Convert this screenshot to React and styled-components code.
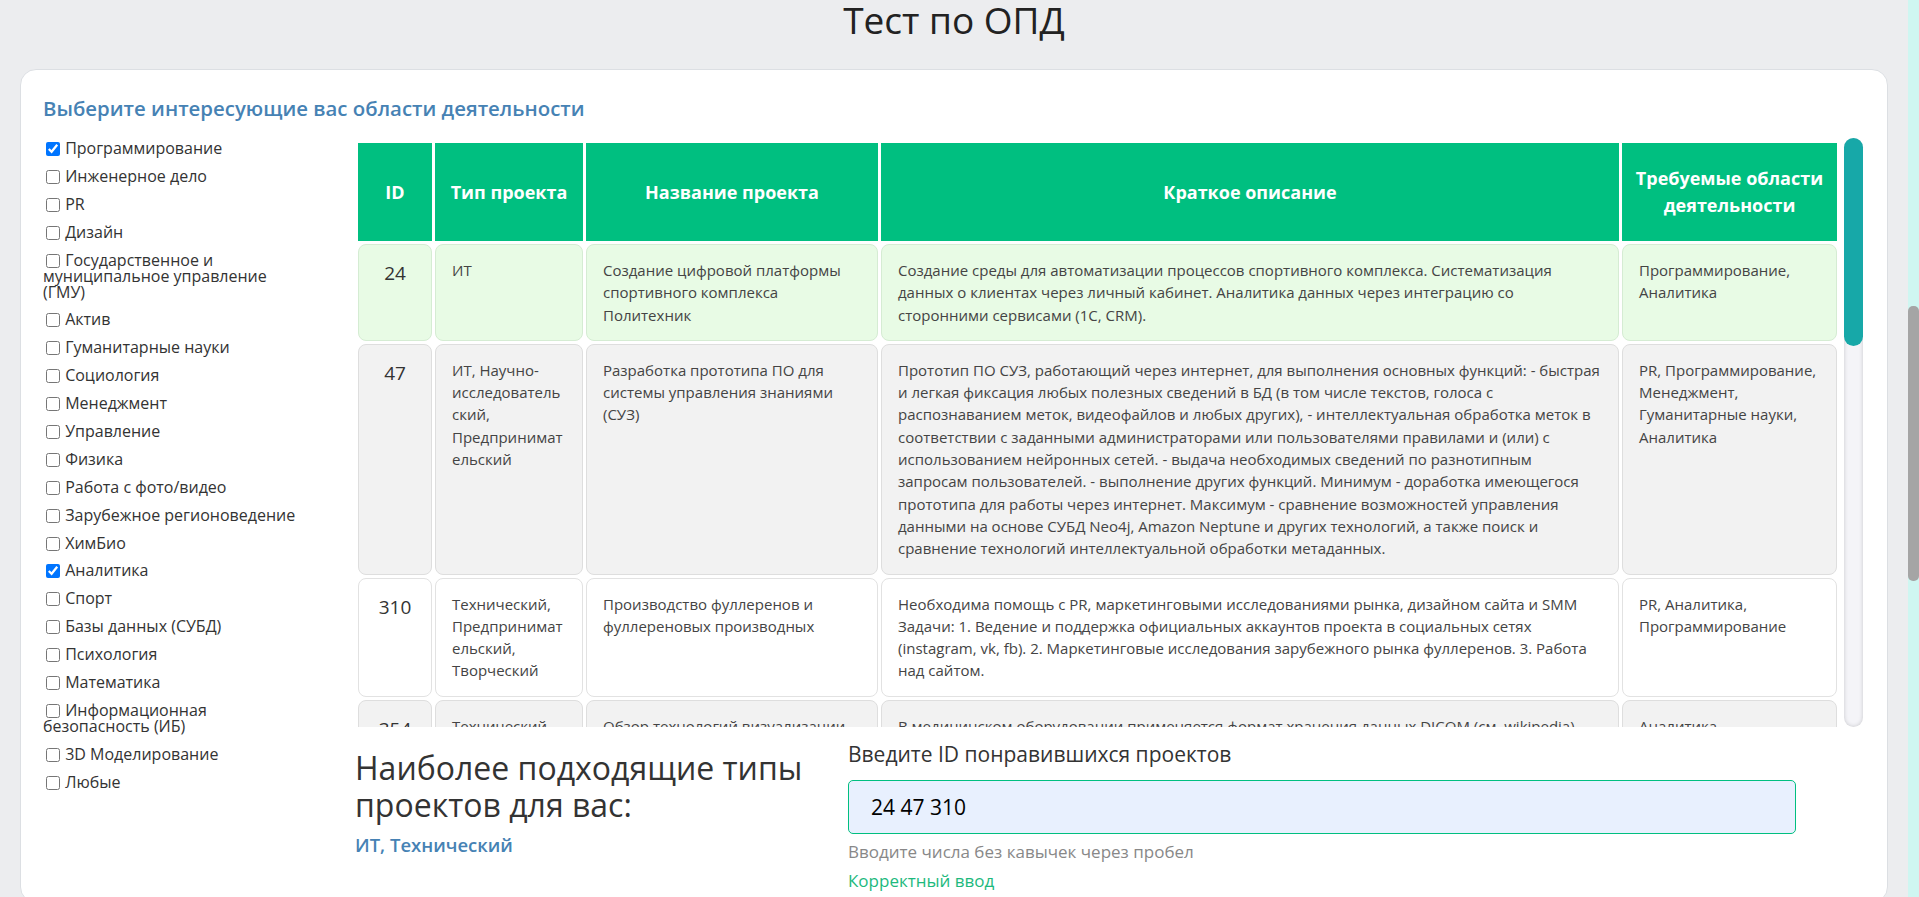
import React from 'react';
import styled, { createGlobalStyle } from 'styled-components';

const GlobalStyle = createGlobalStyle`
  body {
    margin: 0;
    overflow: hidden;
    background: #ecedef;
    font-family: 'Open Sans', 'Noto Sans', sans-serif;
    color: #333;
  }
`;

const areas = [
  { name: 'Программирование', checked: true },
  { name: 'Инженерное дело' },
  { name: 'PR' },
  { name: 'Дизайн' },
  { name: 'Государственное и муниципальное управление (ГМУ)' },
  { name: 'Актив' },
  { name: 'Гуманитарные науки' },
  { name: 'Социология' },
  { name: 'Менеджмент' },
  { name: 'Управление' },
  { name: 'Физика' },
  { name: 'Работа с фото/видео' },
  { name: 'Зарубежное регионоведение' },
  { name: 'ХимБио' },
  { name: 'Аналитика', checked: true },
  { name: 'Спорт' },
  { name: 'Базы данных (СУБД)' },
  { name: 'Психология' },
  { name: 'Математика' },
  { name: 'Информационная безопасность (ИБ)' },
  { name: '3D Моделирование' },
  { name: 'Любые' },
];

const projects = [
  {
    id: 24,
    type: 'ИТ',
    title: 'Создание цифровой платформы спортивного комплекса Политехник',
    text: 'Создание среды для автоматизации процессов спортивного комплекса. Систематизация\nданных о клиентах через личный кабинет. Аналитика данных через интеграцию со\nсторонними сервисами (1С, CRM).',
    areas: 'Программирование, Аналитика',
  },
  {
    id: 47,
    type: 'ИТ, Научно-исследовательский, Предпринимательский',
    title: 'Разработка прототипа ПО для системы управления знаниями (СУЗ)',
    text: 'Прототип ПО СУЗ, работающий через интернет, для выполнения основных функций: - быстрая\nи легкая фиксация любых полезных сведений в БД (в том числе текстов, голоса с\nраспознаванием меток, видеофайлов и любых других), - интеллектуальная обработка меток в\nсоответствии с заданными администраторами или пользователями правилами и (или) с\nиспользованием нейронных сетей. - выдача необходимых сведений по разнотипным\nзапросам пользователей. - выполнение других функций. Минимум - доработка имеющегося\nпрототипа для работы через интернет. Максимум - сравнение возможностей управления\nданными на основе СУБД Neo4j, Amazon Neptune и других технологий, а также поиск и\nсравнение технологий интеллектуальной обработки метаданных.',
    areas: 'PR, Программирование, Менеджмент, Гуманитарные науки, Аналитика',
  },
  {
    id: 310,
    type: 'Технический, Предпринимательский, Творческий',
    title: 'Производство фуллеренов и фуллереновых производных',
    text: 'Необходима помощь с PR, маркетинговыми исследованиями рынка, дизайном сайта и SMM\nЗадачи: 1. Ведение и поддержка официальных аккаунтов проекта в социальных сетях\n(instagram, vk, fb). 2. Маркетинговые исследования зарубежного рынка фуллеренов. 3. Работа\nнад сайтом.',
    areas: 'PR, Аналитика, Программирование',
  },
  {
    id: 354,
    type: 'Технический',
    title: 'Обзор технологий визуализации медицинских изображений',
    text: 'В медицинском оборудовании применяется формат хранения данных DICOM (см. wikipedia).\nНеобходимо провести обзор библиотек и программных средств для просмотра и обработки\nтаких данных, сравнить их возможности и подготовить рекомендации.',
    areas: 'Аналитика',
  },
  {
    id: 411,
    type: 'ИТ',
    title: 'Мобильное приложение для навигации по кампусу',
    text: 'Разработка мобильного приложения, позволяющего студентам и гостям университета\nнаходить аудитории, учебные корпуса и общежития. Интеграция с расписанием занятий.',
    areas: 'Программирование, Дизайн',
  },
];

const tones = {
  hover: { bg: '#e8fbe5', border: '#d5ecd3' },
  odd: { bg: '#f2f2f2', border: '#dedede' },
  even: { bg: '#ffffff', border: '#e2e2e2' },
};

const App = () => {
  return (
    <>
      <GlobalStyle />
      <Viewport>
        <Page>
          <Title>Тест по ОПД</Title>
          <Card>
            <CardHeading>Выберите интересующие вас области деятельности</CardHeading>
            <Layout>
              <Sidebar>
                {areas.map((a) => (
                  <Option key={a.name}>
                    <input type="checkbox" defaultChecked={!!a.checked} /> {a.name}
                  </Option>
                ))}
              </Sidebar>
              <Main>
                <TableFrame>
                  <TableBox>
                    <Table>
                      <thead>
                        <tr>
                          <HeadCell $w={74}>ID</HeadCell>
                          <HeadCell $w={148}>Тип проекта</HeadCell>
                          <HeadCell $w={292}>Название проекта</HeadCell>
                          <HeadCell $w={738}>Краткое описание</HeadCell>
                          <HeadCell>Требуемые области деятельности</HeadCell>
                        </tr>
                      </thead>
                      <tbody>
                        {projects.map((p, i) => (
                          <Row key={p.id} $tone={i === 0 ? 'hover' : i % 2 ? 'odd' : 'even'}>
                            <IdCell>{p.id}</IdCell>
                            <Cell>{p.type}</Cell>
                            <Cell>{p.title}</Cell>
                            <TextCell>{p.text}</TextCell>
                            <Cell>{p.areas}</Cell>
                          </Row>
                        ))}
                      </tbody>
                    </Table>
                  </TableBox>
                  <ScrollTrack>
                    <ScrollThumb />
                  </ScrollTrack>
                </TableFrame>
                <Bottom>
                  <Result>
                    <ResultTitle>Наиболее подходящие типы проектов для вас:</ResultTitle>
                    <ResultValue>ИТ, Технический</ResultValue>
                  </Result>
                  <Form>
                    <FieldLabel htmlFor="ids">Введите ID понравившихся проектов</FieldLabel>
                    <Input id="ids" defaultValue="24 47 310" />
                    <Hint>Вводите числа без кавычек через пробел</Hint>
                    <Valid>Корректный ввод</Valid>
                  </Form>
                </Bottom>
              </Main>
            </Layout>
          </Card>
        </Page>
        <PageRail>
          <PageThumb />
        </PageRail>
      </Viewport>
    </>
  );
};

const Viewport = styled.div`
  display: flex;
  height: 100vh;
  overflow: hidden;
`;

const Page = styled.div`
  flex: 1;
  min-width: 0;
  padding: 0 20px;
`;

const PageRail = styled.div`
  width: 11px;
  flex-shrink: 0;
  background: #cff6f1;
`;

const PageThumb = styled.div`
  margin-top: 306px;
  height: 275px;
  border-radius: 5px;
  background: #a5a5a5;
`;

const Title = styled.h1`
  margin: 0 0 29px;
  text-align: center;
  font-size: 37px;
  line-height: 40px;
  font-weight: 500;
  color: #222;
`;

const Card = styled.section`
  background: #fff;
  border: 1px solid #dcdfe3;
  border-radius: 16px;
  padding: 25px 24px 10px 22px;
`;

const CardHeading = styled.h2`
  margin: 0 0 17px;
  font-size: 20.4px;
  line-height: 26px;
  font-weight: 600;
  color: #4682b4;
`;

const Layout = styled.div`
  display: flex;
  align-items: flex-start;
  gap: 47px;
`;

const Sidebar = styled.div`
  width: 265px;
  flex-shrink: 0;
  padding-top: 2px;
`;

const Option = styled.label`
  display: block;
  margin-bottom: 11.9px;
  font-size: 16px;
  line-height: 16px;
  color: #333;
  input {
    width: 14px;
    height: 14px;
    margin: 0 1px 0 3px;
    vertical-align: -2px;
  }
`;

const Main = styled.div`
  flex: 1;
  min-width: 0;
`;

const TableFrame = styled.div`
  display: flex;
  gap: 4px;
  height: 589px;
`;

const TableBox = styled.div`
  flex: 1;
  min-width: 0;
  overflow-y: auto;
  scrollbar-width: none;
`;

const ScrollTrack = styled.div`
  width: 19px;
  flex-shrink: 0;
  border-radius: 10px;
  background: #f4f4f8;
  box-shadow: inset 0 0 4px rgba(0, 0, 0, 0.18);
`;

const ScrollThumb = styled.div`
  height: 208px;
  border-radius: 10px;
  background: #17a8a8;
`;

const Table = styled.table`
  width: 100%;
  margin-top: 2px;
  table-layout: fixed;
  border-collapse: separate;
  border-spacing: 3px;
`;

const HeadCell = styled.th`
  position: sticky;
  top: 0;
  box-sizing: border-box;
  width: ${(p) => (p.$w ? `${p.$w}px` : 'auto')};
  height: 98px;
  padding: 0 12px;
  background: #00bf80;
  color: #fff;
  font-size: 18px;
  line-height: 27px;
  font-weight: 700;
  text-align: center;
`;

const Row = styled.tr`
  & > td {
    background: ${(p) => tones[p.$tone].bg};
    border-color: ${(p) => tones[p.$tone].border};
  }
`;

const Cell = styled.td`
  border: 1px solid #e2e2e2;
  border-radius: 8px;
  padding: 14px 16px;
  vertical-align: top;
  font-size: 15px;
  line-height: 22.3px;
  color: #444;
  overflow-wrap: break-word;
`;

const TextCell = styled(Cell)`
  white-space: pre-line;
`;

const IdCell = styled(Cell)`
  text-align: center;
  font-size: 19px;
  line-height: 28px;
  color: #333;
`;

const Bottom = styled.div`
  display: flex;
  gap: 23px;
  margin-top: 13px;
`;

const Result = styled.div`
  width: 470px;
  flex-shrink: 0;
`;

const ResultTitle = styled.h3`
  margin: 9px 0 8px;
  font-size: 32px;
  line-height: 37px;
  font-weight: 500;
  color: #333;
`;

const ResultValue = styled.div`
  font-size: 18.5px;
  line-height: 28px;
  font-weight: 600;
  color: #4682b4;
`;

const Form = styled.div`
  width: 948px;
`;

const FieldLabel = styled.label`
  display: block;
  margin-bottom: 12px;
  font-size: 21px;
  line-height: 28px;
  color: #333;
`;

const Input = styled.input`
  display: block;
  box-sizing: border-box;
  width: 100%;
  height: 54px;
  padding: 0 22px;
  border: 1px solid #00bf80;
  border-radius: 5px;
  background: #e8f0fe;
  font-family: 'Open Sans', sans-serif;
  font-size: 21px;
  color: #000;
  outline: none;
`;

const Hint = styled.div`
  margin-top: 7px;
  font-size: 17px;
  line-height: 22px;
  color: #888;
`;

const Valid = styled.div`
  margin-top: 7px;
  font-size: 17px;
  line-height: 22px;
  color: #1db97d;
`;

export default App;
